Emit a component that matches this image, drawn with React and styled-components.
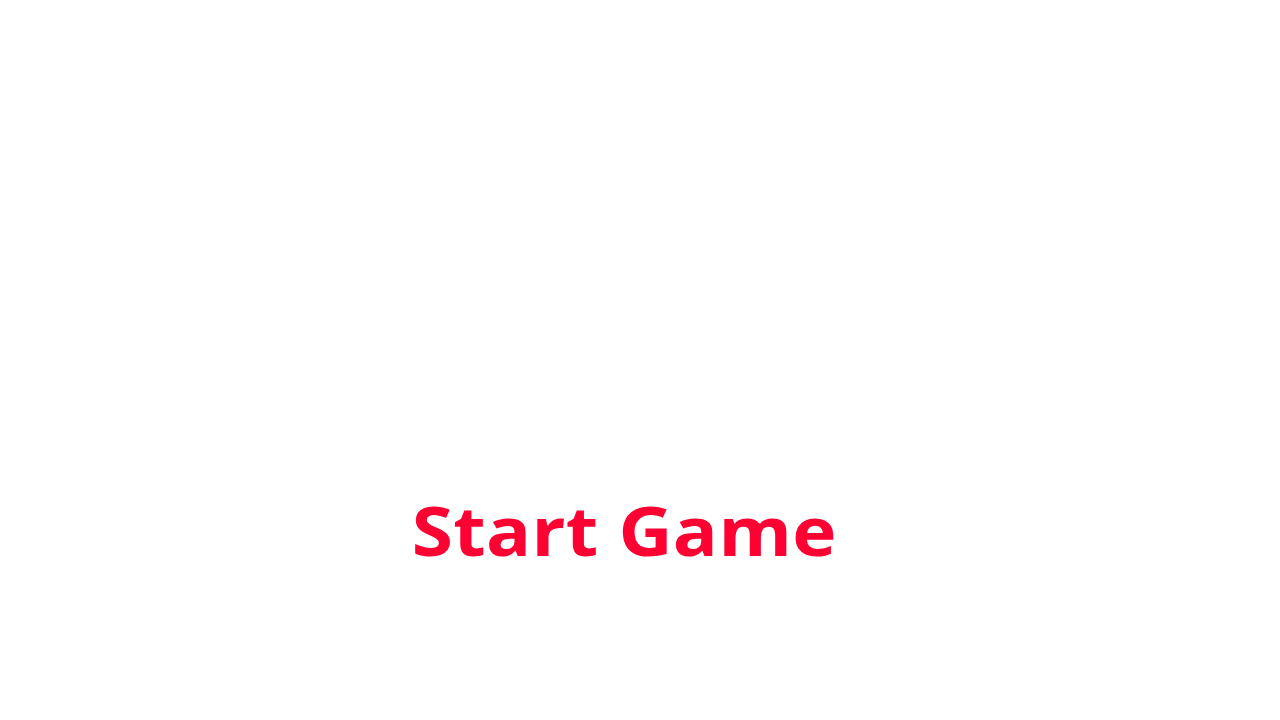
import React from 'react'
import styled, { createGlobalStyle } from 'styled-components'

const Global = createGlobalStyle`
    html, body { margin: 0; padding: 0; background: #fff; }
`

const Screen = styled.div`
    width: 1280px;
    height: 720px;
    display: flex;
    flex-direction: column;
    align-items: center;
    justify-content: flex-start;
    padding-top: 484px;
    box-sizing: border-box;
`

// the title is drawn a bit wider than the font's natural width
const StartButton = styled.button`
    border: none;
    background: none;
    padding: 0;
    margin-right: 31px;
    font-family: "Open Sans", sans-serif;
    font-weight: 700;
    font-size: 68px;
    line-height: 92px;
    letter-spacing: 0.3px;
    color: #ff0033;
    transform: scaleX(1.1);
    cursor: pointer;
`

const App = () =>
    <Screen>
        <Global />
        <StartButton>Start Game</StartButton>
    </Screen>

export default App
